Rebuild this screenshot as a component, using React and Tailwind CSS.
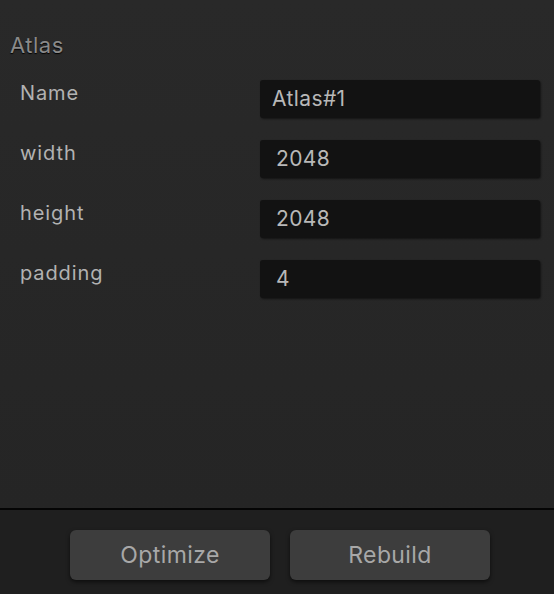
export default function App() {
  const rows = [
    { label: "Name", value: "Atlas#1", pad: "pl-3" },
    { label: "width", value: "2048", pad: "pl-4" },
    { label: "height", value: "2048", pad: "pl-4" },
    { label: "padding", value: "4", pad: "pl-4" },
  ];
  return (
    <div
      className="w-[554px] h-[594px] flex flex-col bg-[#282828] overflow-hidden"
      style={{ fontFamily: "Inter, 'Noto Sans', sans-serif" }}
    >
      <div className="flex-1 flex flex-col bg-gradient-to-b from-[#292929] to-[#252525]">
        <div className="pl-[10px] pt-[31px] text-[22px] leading-[28px] tracking-[0.5px] text-[#8a8a8a] [text-shadow:0_1px_1px_#000]">
          Atlas
        </div>
        <div className="flex flex-col gap-[22px] pt-[21px] pl-[20px] pr-[14px]">
          {rows.map((r) => (
            <div key={r.label} className="flex items-start">
              <div className="w-[240px] text-[20px] leading-[26px] tracking-[0.9px] text-[#b2b2b2]">
                {r.label}
              </div>
              <div
                className={`w-[280px] h-[38px] flex items-center ${r.pad} bg-[#121212] rounded-[3px] shadow-[1px_1px_2px_rgba(0,0,0,0.5)] text-[21px] tracking-[0.4px] text-[#b8b8b8]`}
              >
                {r.value}
              </div>
            </div>
          ))}
        </div>
      </div>
      <div className="h-[2px] bg-[#050505]" />
      <div className="h-[84px] bg-[#1f1f1f] flex gap-[20px] pl-[70px] pt-[20px]">
        {["Optimize", "Rebuild"].map((t) => (
          <div
            key={t}
            className="w-[200px] h-[50px] rounded-[6px] bg-[#3d3d3d] flex items-center justify-center text-[23px] tracking-[0.4px] text-[#a8a8a8] shadow-[0_2px_4px_rgba(0,0,0,0.6)]"
          >
            {t}
          </div>
        ))}
      </div>
    </div>
  );
}
